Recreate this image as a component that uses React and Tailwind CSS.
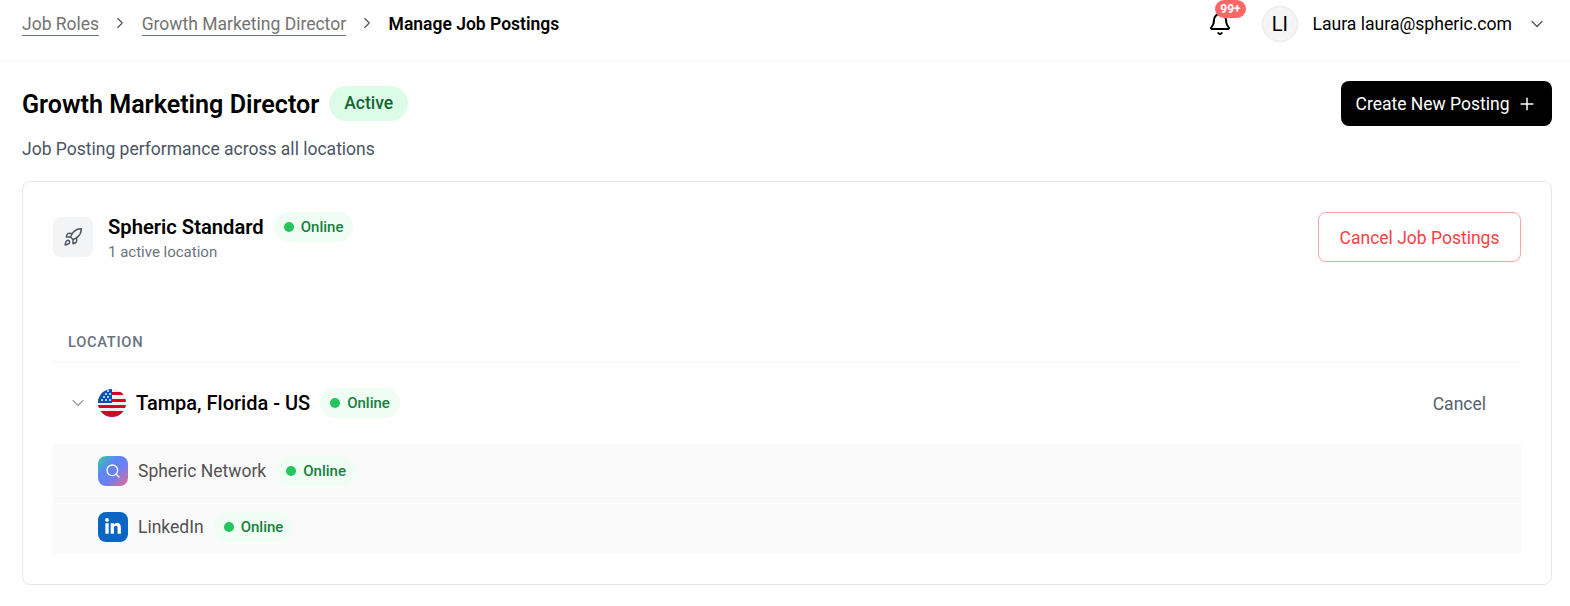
import { Bell, ChevronDown, ChevronRight, Plus, Rocket, Search } from "lucide-react";
import { FaLinkedinIn } from "react-icons/fa";

const OnlineBadge = ({ className = "" }) => (
  <span className={`flex h-[30px] items-center gap-[7px] rounded-full bg-[#f0fdf4] px-[10px] text-[15px] font-medium text-[#15803d] ${className}`}>
    <span className="h-[10px] w-[10px] rounded-full bg-[#22c55e]" />
    Online
  </span>
);

const UsFlag = () => (
  <svg width="28" height="28" viewBox="0 0 28 28" className="shrink-0">
    <defs>
      <clipPath id="flag-circle">
        <circle cx="14" cy="14" r="14" />
      </clipPath>
    </defs>
    <g clipPath="url(#flag-circle)">
      <rect width="28" height="28" fill="#f0f0f0" />
      <rect y="3" width="28" height="3" fill="#d80027" />
      <rect y="10" width="28" height="3" fill="#d80027" />
      <rect y="16" width="28" height="3" fill="#d80027" />
      <rect y="22" width="28" height="6" fill="#d80027" />
      <rect width="14" height="14" fill="#0052b4" />
      <g fill="#f0f0f0">
        <circle cx="4" cy="11" r="1" />
        <circle cx="8" cy="11" r="1" />
        <circle cx="12" cy="11" r="1" />
        <circle cx="6" cy="8" r="1" />
        <circle cx="10" cy="8" r="1" />
        <circle cx="8" cy="5" r="1" />
        <circle cx="12" cy="5" r="1" />
        <circle cx="10" cy="2" r="1" />
      </g>
    </g>
  </svg>
);

const App = () => {
  return (
    <div className="min-h-screen bg-white font-['Roboto',sans-serif] text-black">
      {/* Top bar */}
      <header className="flex h-[61px] items-center justify-between border-b border-[#f3f4f6] pb-[12px] pl-[22px] pr-[18px]">
        <nav className="flex items-center text-[17.5px]">
          <a className="border-b border-[#6b7280] pt-[1px] leading-[22px] text-[#737373]">Job Roles</a>
          <ChevronRight size={18} strokeWidth={1.5} className="mx-[12.25px] mb-[2px] text-[#525252]" />
          <a className="border-b border-[#6b7280] pt-[1px] leading-[22px] text-[#737373]">Growth Marketing Director</a>
          <ChevronRight size={18} strokeWidth={1.5} className="mx-[12.25px] mb-[2px] text-[#525252]" />
          <span className="font-semibold">Manage Job Postings</span>
        </nav>
        <div className="flex items-center">
          <div className="relative mr-[30px] flex h-[36px] w-[24px] items-center justify-center">
            <Bell size={24} strokeWidth={2} />
            <span className="absolute left-[7px] top-[-6px] flex h-[18px] w-[31px] items-center justify-center rounded-full bg-[#ff6666] text-xs font-bold text-white">
              99+
            </span>
          </div>
          <div className="flex h-[36px] w-[36px] items-center justify-center rounded-full border border-[#e5e7eb] bg-[#f5f5f5] text-xl">
            LI
          </div>
          <span className="ml-[14.5px] text-[17.6px]">Laura laura@spheric.com</span>
          <ChevronDown size={20} strokeWidth={1.5} className="ml-[15px] mr-[5px] text-[#52525b]" />
        </div>
      </header>

      <main className="pl-[22px] pr-[18px]">
        {/* Title row */}
        <div className="flex items-start justify-between pt-[20px]">
          <div>
            <div className="flex h-[45px] items-center gap-[10px]">
              <h1 className="mt-[2px] text-[25.1px] font-semibold">Growth Marketing Director</h1>
              <span className="flex h-[35px] items-center rounded-full bg-[#dcfce7] px-[15px] text-[17.5px] font-medium text-[#166534]">
                Active
              </span>
            </div>
            <p className="mt-[11px] text-[17.5px] leading-[24px] text-[#4b5563]">Job Posting performance across all locations</p>
          </div>
          <button className="flex h-[45px] w-[211px] items-center justify-center gap-[8px] rounded-lg bg-black pt-[1px] text-[17.5px] text-white">
            Create New Posting
            <Plus size={20} strokeWidth={1.75} />
          </button>
        </div>

        {/* Card */}
        <section className="mt-[20px] h-[404px] rounded-lg border border-[#e5e7eb] px-[30px] pt-[30px]">
          <div className="flex items-start justify-between">
            <div className="flex pt-[5px]">
              <div className="flex h-[40px] w-[40px] items-center justify-center rounded-lg bg-[#f3f4f6]">
                <Rocket size={20} strokeWidth={1.75} className="text-[#4b5563]" />
              </div>
              <div className="ml-[15px]">
                <div className="mt-[-5px] flex items-center gap-[10px]">
                  <span className="text-[20.2px] font-semibold">Spheric Standard</span>
                  <OnlineBadge />
                </div>
                <p className="text-[15px] leading-[20px] text-[#6b7280]">1 active location</p>
              </div>
            </div>
            <button className="flex h-[50px] w-[203px] items-center justify-center rounded-lg border border-[#fca5a5] pt-[2px] text-[17.5px] text-[#ef4444]">
              Cancel Job Postings
            </button>
          </div>

          {/* Location table */}
          <div className="mt-[59px] flex h-[42px] items-center border-b border-[#f3f4f6] px-[15px] text-[14.7px] font-medium tracking-[0.7px] text-[#6b7280]">
            LOCATION
          </div>

          <div className="flex h-[81px] items-center justify-between pb-[1px] pl-[15px] pr-[35px]">
            <div className="flex items-center">
              <ChevronDown size={20} strokeWidth={1.25} className="text-[#737373]" />
              <div className="ml-[10px]">
                <UsFlag />
              </div>
              <span className="ml-[10px] text-xl font-medium">Tampa, Florida - US</span>
              <OnlineBadge className="ml-[10px]" />
            </div>
            <button className="mt-[2px] text-[17.5px] text-[#566070]">Cancel</button>
          </div>

          <div className="bg-[#fafafa]">
            <div className="flex h-[55px] items-center border-b border-[#f3f4f6] pl-[45px]">
              <div className="flex h-[30px] w-[30px] items-center justify-center rounded-lg bg-[linear-gradient(135deg,#34d399_0%,#5b86f5_35%,#6f7ff0_60%,#ec6a8e_100%)]">
                <Search size={16} strokeWidth={2} className="text-white" />
              </div>
              <span className="ml-[10px] text-[17.5px] text-[#525252]">Spheric Network</span>
              <OnlineBadge className="ml-[10px]" />
            </div>
            <div className="flex h-[55px] items-center pl-[45px] pt-[1px]">
              <div className="flex h-[30px] w-[30px] items-center justify-center rounded-lg bg-[#0a66c2]">
                <FaLinkedinIn size={18} className="text-white" />
              </div>
              <span className="ml-[10px] text-[17.5px] text-[#525252]">LinkedIn</span>
              <OnlineBadge className="ml-[10px]" />
            </div>
          </div>
        </section>
      </main>
    </div>
  );
};

export default App;
